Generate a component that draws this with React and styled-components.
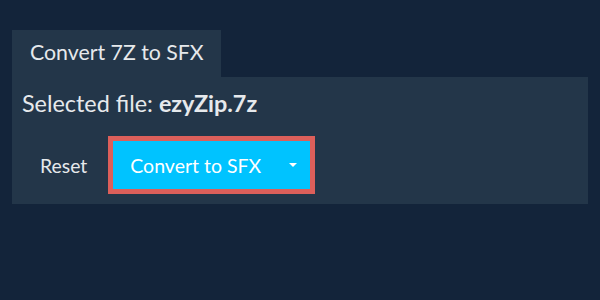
import styled, { createGlobalStyle } from "styled-components";

const GlobalStyle = createGlobalStyle`
  html, body {
    margin: 0;
    padding: 0;
    background: #13243a;
    font-family: Lato, "Noto Sans", sans-serif;
    color: #e6e9ec;
  }
`;

function App() {
  return (
    <>
      <GlobalStyle />
      <Page>
        <Tab>Convert 7Z to SFX</Tab>
        <Panel>
          <FileLine>
            Selected file: <strong>ezyZip.7z</strong>
          </FileLine>
          <Actions>
            <ResetButton>Reset</ResetButton>
            <ConvertButton>
              <span>Convert to SFX</span>
              <Caret />
            </ConvertButton>
          </Actions>
        </Panel>
      </Page>
    </>
  );
}

const Page = styled.div`
  padding: 30px 12px 0 12px;
  width: 576px;
`;

const Tab = styled.div`
  display: inline-block;
  background: #233649;
  height: 47px;
  line-height: 44px;
  padding: 0 17px 0 18px;
  font-size: 21.3px;
`;

const Panel = styled.div`
  background: #233649;
  height: 127px;
  box-sizing: border-box;
  padding: 11px 10px 0 10px;
`;

const FileLine = styled.div`
  font-size: 23.4px;
  line-height: 30px;

  strong {
    font-weight: 700;
  }
`;

const Actions = styled.div`
  display: flex;
  align-items: center;
  margin-top: 18px;
`;

const ResetButton = styled.button`
  background: none;
  border: none;
  color: #e6e9ec;
  font-family: inherit;
  font-size: 19.4px;
  padding: 0 18px;
  margin-right: 3px;
`;

const ConvertButton = styled.button`
  display: flex;
  align-items: center;
  box-sizing: border-box;
  width: 207px;
  height: 58px;
  border: 5px solid #dc5f5a;
  background: #00c3ff;
  color: #ffffff;
  font-family: inherit;
  font-size: 19.5px;
  padding: 0 13px 0 17px;
  justify-content: space-between;
`;

const Caret = styled.span`
  width: 0;
  height: 0;
  border-left: 4px solid transparent;
  border-right: 4px solid transparent;
  border-top: 4px solid #ffffff;
`;

export default App;
